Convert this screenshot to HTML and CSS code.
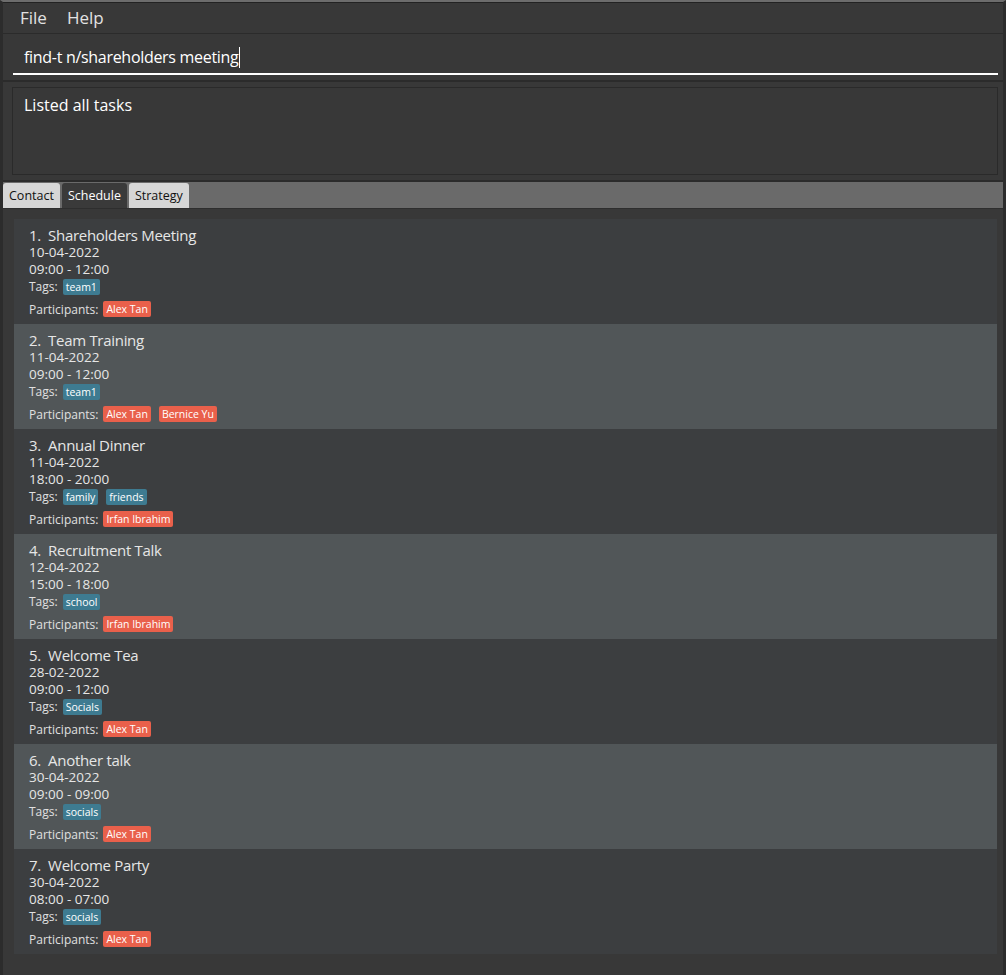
FILE: index.html
```html
<!DOCTYPE html>
<html lang="en">
<head>
  <meta charset="UTF-8">
  <title>Task Manager</title>
  <link rel="stylesheet" href="styles.css">
</head>
<body>
  <div class="window">
    <div class="menu_bar">
      <span class="menu_item">File</span>
      <span class="menu_item">Help</span>
    </div>
    <div class="command_box">
      <div class="command_field">find-t n/shareholders meeting<span class="caret"></span></div>
    </div>
    <div class="result_pane">
      <div class="result_box">Listed all tasks</div>
    </div>
    <div class="tab_bar">
      <span class="tab">Contact</span>
      <span class="tab tab_active">Schedule</span>
      <span class="tab">Strategy</span>
    </div>
    <div class="list_pane">
      <ul class="task_list" id="taskList"></ul>
    </div>
  </div>
  <script>
    const tasks = [
      { name: 'Shareholders Meeting', date: '10-04-2022', time: '09:00 - 12:00', tags: ['team1'], people: ['Alex Tan'] },
      { name: 'Team Training', date: '11-04-2022', time: '09:00 - 12:00', tags: ['team1'], people: ['Alex Tan', 'Bernice Yu'] },
      { name: 'Annual Dinner', date: '11-04-2022', time: '18:00 - 20:00', tags: ['family', 'friends'], people: ['Irfan Ibrahim'] },
      { name: 'Recruitment Talk', date: '12-04-2022', time: '15:00 - 18:00', tags: ['school'], people: ['Irfan Ibrahim'] },
      { name: 'Welcome Tea', date: '28-02-2022', time: '09:00 - 12:00', tags: ['Socials'], people: ['Alex Tan'] },
      { name: 'Another talk', date: '30-04-2022', time: '09:00 - 09:00', tags: ['socials'], people: ['Alex Tan'] },
      { name: 'Welcome Party', date: '30-04-2022', time: '08:00 - 07:00', tags: ['socials'], people: ['Alex Tan'] }
    ];

    const taskList = document.getElementById('taskList');

    function chips(items, cls) {
      return items.map(item => '<span class="chip ' + cls + '">' + item + '</span>').join('');
    }

    tasks.forEach((task, i) => {
      const li = document.createElement('li');
      li.className = 'task_cell';
      li.innerHTML =
        '<div class="task_title">' + (i + 1) + '.&nbsp; ' + task.name + '</div>' +
        '<div class="task_line">' + task.date + '</div>' +
        '<div class="task_line">' + task.time + '</div>' +
        '<div class="task_row task_tags">Tags: ' + chips(task.tags, 'chip_tag') + '</div>' +
        '<div class="task_row task_people">Participants: ' + chips(task.people, 'chip_person') + '</div>';
      taskList.appendChild(li);
    });
  </script>
</body>
</html>
```

FILE: styles.css
```css
html, body {
  margin: 0;
  padding: 0;
}
body {
  background-color: #383838;
  font-family: "Open Sans", "Noto Sans", sans-serif;
  color: #ffffff;
}
.window {
  width: 1006px;
  height: 975px;
  box-sizing: border-box;
  border-top: 2px solid #6c6c6c;
  border-left: 3px solid #2c2c2c;
  border-right: 3px solid #2c2c2c;
  display: flex;
  flex-direction: column;
  overflow: hidden;
}
.menu_bar {
  height: 32px;
  flex-shrink: 0;
  box-sizing: border-box;
  border-top: 1px solid #222;
  border-bottom: 1px solid #2b2b2b;
  display: flex;
  align-items: center;
  padding-left: 17px;
  padding-bottom: 2px;
  gap: 20px;
}
.menu_item {
  font-size: 17px;
  color: #e2e2e2;
}
.command_box {
  height: 48px;
  flex-shrink: 0;
  box-sizing: border-box;
  padding: 0 5px 0 10px;
  display: flex;
  align-items: stretch;
  border-bottom: 2px solid #2b2b2b;
}
.command_field {
  flex: 1;
  display: flex;
  align-items: flex-end;
  padding: 0 0 5px 11px;
  font-size: 16px;
  line-height: 22px;
  letter-spacing: -0.3px;
  color: #fff;
  border-bottom: 2px solid #fff;
  margin-bottom: 5px;
}
.caret {
  display: inline-block;
  width: 1px;
  height: 21px;
  background-color: #fff;
  margin-left: 1px;
}
.result_pane {
  height: 100px;
  flex-shrink: 0;
  box-sizing: border-box;
  padding: 5px 5px 5px 9px;
  border-bottom: 2px solid #2b2b2b;
}
.result_box {
  height: 100%;
  box-sizing: border-box;
  border: 1px solid #2a2a2a;
  padding: 6px 11px;
  font-size: 16px;
  color: #fff;
}
.tab_bar {
  height: 26px;
  flex-shrink: 0;
  background-color: #6a6a6a;
  display: flex;
  align-items: flex-end;
  padding-left: 0;
  gap: 2px;
  border-bottom: 1px solid #2e2e2e;
}
.tab {
  height: 25px;
  box-sizing: border-box;
  padding: 0 6px;
  display: flex;
  align-items: center;
  font-size: 12.5px;
  color: #111;
  background-color: #d6d6d6;
  border-radius: 3px 3px 0 0;
}
.tab.tab_active {
  background-color: #3a3a3a;
  color: #fff;
}
.list_pane {
  flex: 1;
  padding: 10px 6px 0 11px;
}
.task_list {
  list-style: none;
  margin: 0;
  padding: 0;
}
.task_cell {
  height: 105px;
  box-sizing: border-box;
  padding: 7px 15px 0;
  background-color: #3c3e40;
}
.task_cell:nth-child(even) {
  background-color: #515658;
}
.task_title {
  font-size: 15px;
  line-height: 18px;
  letter-spacing: -0.3px;
  color: #e6e6e6;
}
.task_line {
  font-size: 13.5px;
  line-height: 17px;
  color: #e6e6e6;
}
.task_row {
  display: flex;
  align-items: center;
  gap: 5px;
  font-size: 12px;
  color: #e0e0e0;
}
.task_tags {
  height: 17px;
}
.task_people {
  height: 22px;
  margin-top: 3px;
}
.chip {
  font-size: 10.5px;
  line-height: 16px;
  padding: 0 3px;
  border-radius: 2px;
  color: #fff;
  margin-right: 3px;
}
.chip_tag {
  background-color: #3e7b91;
}
.chip_person {
  background-color: #e9604b;
}
```
